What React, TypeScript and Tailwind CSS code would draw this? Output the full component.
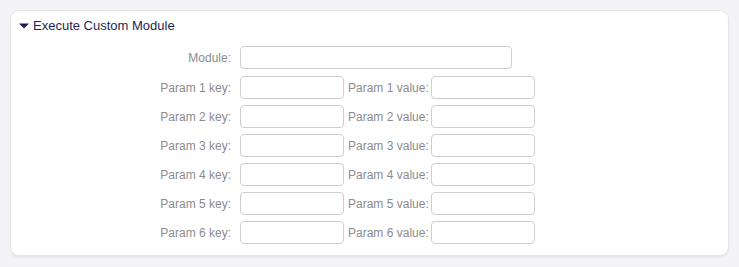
const params = [1, 2, 3, 4, 5, 6]

function Field({ width }: { width: string }) {
  return <input type="text" className={`${width} h-[23px] shrink-0 rounded-[4px] border border-[#cfcfd3] bg-white outline-none`} />
}

export default function App() {
  return (
    <div className="min-h-[267px] bg-[#f4f4f6] px-[10px] pt-[10px] font-['Liberation_Sans',Arial,sans-serif]">
      <div className="h-[246px] rounded-[9px] border border-[#e6e6ea] bg-white shadow-[0_2px_2px_rgba(0,0,0,0.05)]">
        <div className="flex items-center pl-[8px] pt-[7px] text-[13px] leading-[15px] text-[#1d1f55]">
          <svg width="10" height="6" viewBox="0 0 10 6" className="mr-[4px]">
            <path d="M0 0.5 L10 0.5 L5 5.5 Z" fill="#1d1f55" />
          </svg>
          <span>Execute Custom Module</span>
        </div>

        <div className="mt-[13px] flex flex-col text-[12px] leading-[14px] text-[#8b8b8f]">
          <div className="flex items-center">
            <label className="w-[229px] shrink-0 pr-[9px] text-right">Module:</label>
            <Field width="w-[272px]" />
          </div>
          {params.map((n) => (
            <div key={n} className={`flex items-center ${n === 1 ? 'mt-[7px]' : 'mt-[6px]'}`}>
              <label className="w-[229px] shrink-0 pr-[9px] text-right whitespace-nowrap">Param {n} key:</label>
              <Field width="w-[104px]" />
              <label className="ml-[4px] mr-[2px] whitespace-nowrap">Param {n} value:</label>
              <Field width="w-[104px]" />
            </div>
          ))}
        </div>
      </div>
    </div>
  )
}
